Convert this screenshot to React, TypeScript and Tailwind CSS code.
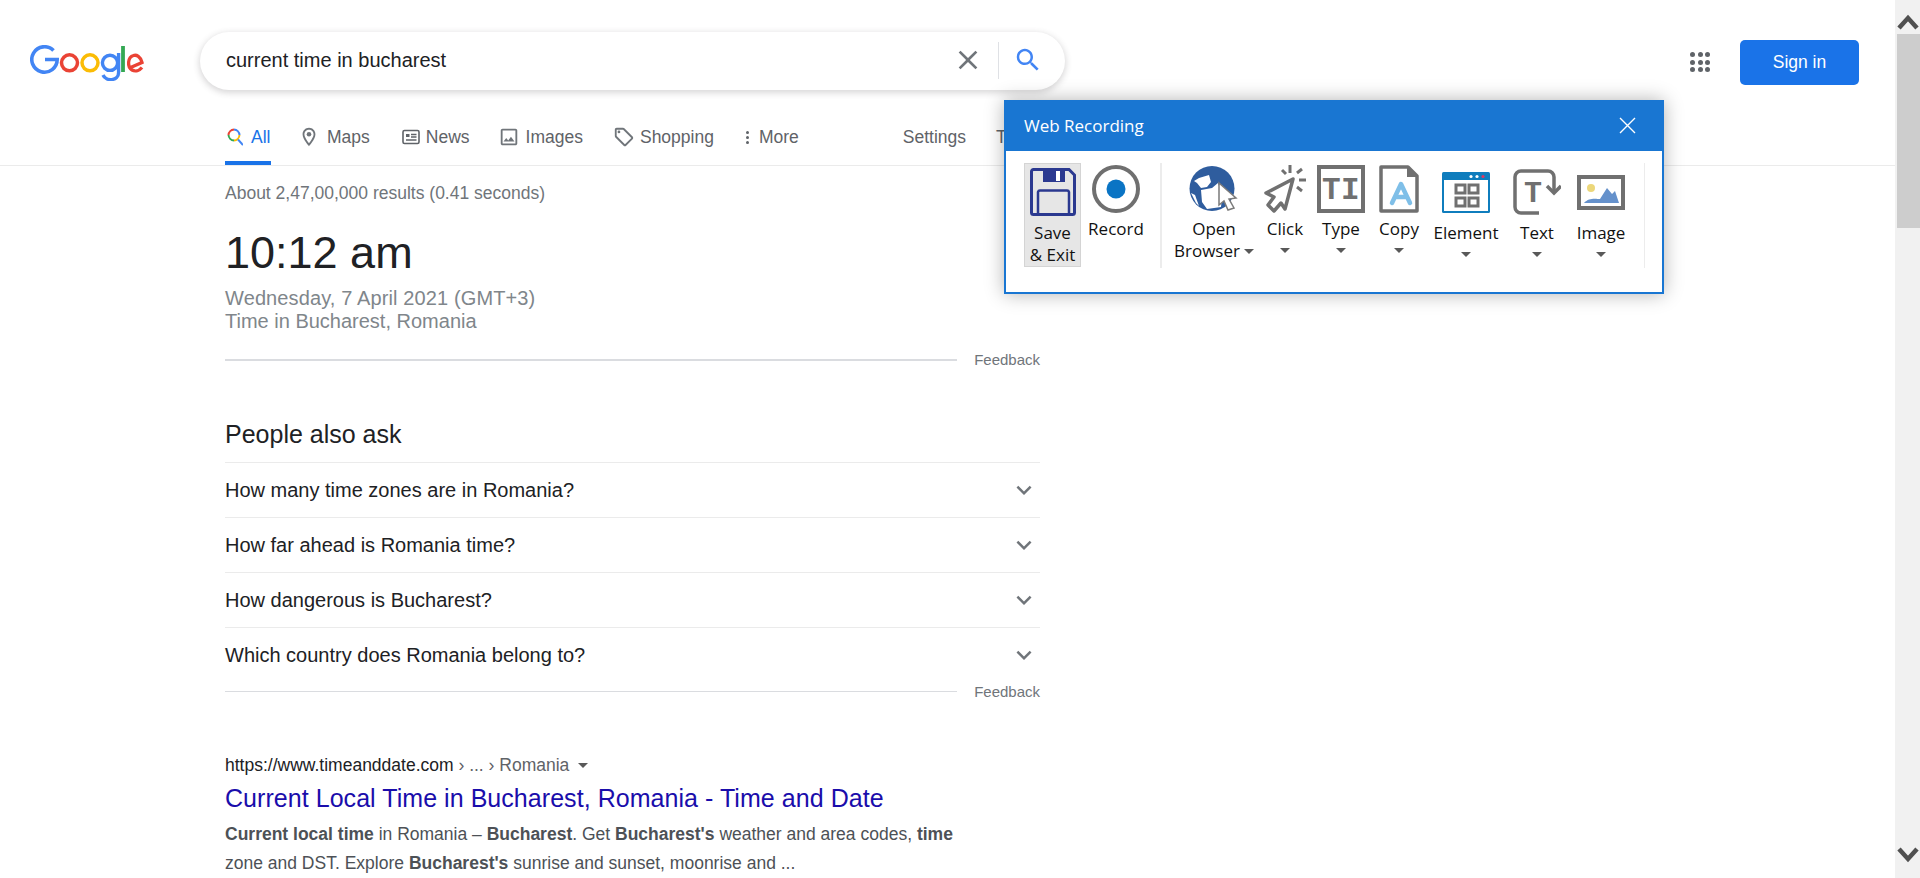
import type { ReactNode } from "react";

const arial = "font-['Liberation_Sans',Arial,sans-serif]";

function GoogleLogo() {
  return (
    <svg width="114" height="36" viewBox="0 0 114 36" fill="none" className="ml-[30px] mt-[13px] shrink-0">
      <path d="M23.5 5.5A12.7 12.7 0 1 0 27.200 14.500H15" stroke="#4285f4" strokeWidth="3.600" />
      <circle cx="39.500" cy="17.800" r="8" stroke="#ea4335" strokeWidth="3.500" />
      <circle cx="60" cy="17.800" r="8" stroke="#fbbc05" strokeWidth="3.500" />
      <circle cx="80" cy="17.800" r="7.600" stroke="#4285f4" strokeWidth="3.400" />
      <path d="M88.600 8V27.500C88.600 36 76 37 73 30" stroke="#4285f4" strokeWidth="3.400" />
      <path d="M93 1V27" stroke="#34a853" strokeWidth="3.800" />
      <path d="M100.500 22.500L112 17.500C110.500 11.500 106.500 9.500 103.500 10.500C97.500 12 97 22 102 25C105.500 27 109.500 25.500 112 22.500" stroke="#ea4335" strokeWidth="3.300" />
    </svg>
  );
}

function MatIcon({ d, size = 22, color = "#70757a", children }: { d: string; size?: number; color?: string; children?: ReactNode }) {
  return (
    <svg width={size} height={size} viewBox="0 0 24 24" fill={color} className="shrink-0">
      <path d={d} />
      {children}
    </svg>
  );
}

const CHEVRON = "M16.59 8.59L12 13.17 7.41 8.59 6 10l6 6 6-6z";

function NavItem({ icon, label, active, className }: { icon?: ReactNode; label: string; active?: boolean; className: string }) {
  return (
    <div
      className={`flex h-full items-center border-b-4 pt-[23px] text-[17.5px] ${
        active ? "border-[#1a73e8] text-[#1a73e8]" : "border-transparent text-[#5f6368]"
      } ${className}`}
    >
      {icon}
      <span>{label}</span>
    </div>
  );
}

function Question({ text }: { text: string }) {
  return (
    <div className="flex h-[55px] items-center justify-between border-t border-[#ebebeb] pr-px text-[20px] text-[#202124]">
      <span>{text}</span>
      <MatIcon d={CHEVRON} size={30} />
    </div>
  );
}

function Feedback({ thick, className = "" }: { thick?: boolean; className?: string }) {
  return (
    <div className={`flex items-center justify-between ${className}`}>
      <div className={`w-[732px] bg-[#dadce0] ${thick ? "h-[2px]" : "h-px"}`} />
      <span className="text-[15px] text-[#70757a]">Feedback</span>
    </div>
  );
}

function Caret({ className = "" }: { className?: string }) {
  return <span className={`inline-block h-0 w-0 border-x-[5px] border-t-[5px] border-x-transparent border-t-[#595959] ${className}`} />;
}

function RibbonItem({
  icon,
  lines,
  className,
  labelClass,
  caret,
}: {
  icon: ReactNode;
  lines: ReactNode[];
  className: string;
  labelClass: string;
  caret?: boolean;
}) {
  return (
    <div className={`flex h-[104px] shrink-0 flex-col items-center ${className}`}>
      <div className="flex h-[48px] items-center justify-center">{icon}</div>
      <div className={`flex flex-col items-center leading-[22px] ${labelClass}`}>
        {lines.map((l, i) => (
          <span key={i} className="flex items-center gap-[4px]">
            {l}
          </span>
        ))}
        {caret && <Caret className="mt-[8px]" />}
      </div>
    </div>
  );
}

function DiskIcon() {
  return (
    <svg width="46" height="48" viewBox="0 0 46 48" fill="none">
      <path d="M3.500 1.500H39L44.500 7V44.500A2 2 0 0 1 42.500 46.500H3.500A2 2 0 0 1 1.500 44.500V3.500A2 2 0 0 1 3.500 1.500Z" stroke="#2b3990" strokeWidth="3" />
      <path d="M13 1H35V14H13Z" fill="#2b3990" />
      <path d="M26 3H30V13H26Z" fill="#fff" />
      <path d="M8 46V24A2 2 0 0 1 10 22.500H37A2 2 0 0 1 39 24V46" stroke="#2b3990" strokeWidth="2.500" />
    </svg>
  );
}

function RecordIcon() {
  return (
    <svg width="48" height="48" viewBox="0 0 48 48" fill="none">
      <circle cx="24" cy="24" r="22" stroke="#6f6f6f" strokeWidth="4" />
      <circle cx="24" cy="24" r="9.500" fill="#0a74c4" />
    </svg>
  );
}

function GlobeIcon() {
  return (
    <svg width="50" height="46" viewBox="0 0 50 46" fill="none">
      <circle cx="23" cy="22.500" r="22.500" fill="#2f5d9e" />
      <path d="M5 15L10 12L20 9L22 16L18 21L12 22L8 17Z" fill="#fff" />
      <path d="M12 24L23 22L29 17L33 31L32 41L18 43L13 36Z" fill="#fff" />
      <path d="M2 27L6 29L10 40L7 37Z" fill="#fff" />
      <path d="M30 17L47 32L40 33L45 42L39 44L35 35L30 39Z" fill="#fff" stroke="#7a7a7a" strokeWidth="1.500" />
    </svg>
  );
}

function ClickIcon() {
  return (
    <svg width="43" height="48" viewBox="0 0 43 48" fill="none" stroke="#707070">
      <path d="M29 14L2 28L10 32L4 40L10 46L17 38L21 44Z" strokeWidth="3.500" strokeLinejoin="round" fill="#fff" />
      <path d="M26 0V8M18 5L22 9M33 8L38 4M35 15H42M33 22L38 26" strokeWidth="3" />
    </svg>
  );
}

function TypeIcon() {
  return (
    <svg width="48" height="48" viewBox="0 0 48 48" fill="none">
      <rect x="2" y="2" width="44" height="44" stroke="#707070" strokeWidth="4" />
      <text x="5" y="34" fill="#707070" fontFamily="'Liberation Mono',monospace" fontWeight="700" fontSize="31">T</text>
      <text x="24" y="34" fill="#707070" fontFamily="'Liberation Mono',monospace" fontWeight="700" fontSize="31">I</text>
    </svg>
  );
}

function CopyIcon() {
  return (
    <svg width="40" height="48" viewBox="0 0 40 48" fill="none">
      <path d="M2 2H29L38 11V46H2Z" stroke="#707070" strokeWidth="3.500" strokeLinejoin="round" />
      <path d="M28 1L39 12H28Z" fill="#707070" />
      <path d="M13 38L22 19L31 38M16 32H28" stroke="#7fbfe8" strokeWidth="4.500" strokeLinecap="round" strokeLinejoin="round" />
    </svg>
  );
}

function ElementIcon() {
  return (
    <svg width="48" height="41" viewBox="0 0 48 41" fill="none">
      <rect width="48" height="41" rx="1.500" fill="#0f7dbd" />
      <rect x="2" y="8" width="44" height="31" fill="#fff" />
      <circle cx="29" cy="4.500" r="1.600" fill="#fff" />
      <circle cx="35" cy="4.500" r="1.600" fill="#fff" />
      <circle cx="41" cy="4.500" r="1.600" fill="#e0355f" />
      <g stroke="#707070" strokeWidth="3">
        <rect x="14" y="13" width="9" height="8" />
        <rect x="27" y="13" width="9" height="8" />
        <rect x="14" y="26" width="9" height="8" />
        <rect x="27" y="26" width="9" height="8" />
      </g>
    </svg>
  );
}

function TextIcon() {
  return (
    <svg width="48" height="46" viewBox="0 0 48 46" fill="none">
      <path d="M26 44H8A6 6 0 0 1 2 38V8A6 6 0 0 1 8 2H35A6 6 0 0 1 41 8V22" stroke="#707070" strokeWidth="3.500" />
      <path d="M34 17L41 24L48 17" stroke="#707070" strokeWidth="3.500" />
      <text x="11" y="33" fill="#707070" fontFamily="'Liberation Mono',monospace" fontWeight="700" fontSize="30">T</text>
    </svg>
  );
}

function ImageIcon() {
  return (
    <svg width="48" height="35" viewBox="0 0 48 35" fill="none">
      <rect x="2" y="2" width="44" height="31" stroke="#707070" strokeWidth="4" />
      <circle cx="14" cy="13" r="4" fill="#ecd77a" />
      <path d="M7 28C12 22 20 24 23 24L30 13L35 19L38 16L42 28Z" fill="#6591cb" />
    </svg>
  );
}

function WebRecording() {
  return (
    <div className="absolute left-[1004px] top-[100px] z-10 h-[194px] w-[660px] border-2 border-[#1976d2] bg-white font-['Open_Sans',sans-serif] text-[17px] text-[#111] shadow-[0_0_18px_rgba(0,0,0,0.3)]">
      <div className="flex h-[49px] items-center justify-between bg-[#1976d2] pb-[2px] pl-[18px] pr-[26px] text-white">
        <span>Web Recording</span>
        <svg width="17" height="17" viewBox="0 0 17 17" stroke="#fff" strokeWidth="1.400">
          <path d="M1 1L16 16M16 1L1 16" />
        </svg>
      </div>
      <div className="flex pl-[18px] pt-[12px]">
        <RibbonItem
          icon={<DiskIcon />}
          lines={["Save", "& Exit"]}
          className="w-[57px] border border-[#d4d4d4] bg-[#e6e6e6] pt-[4px]"
          labelClass="mt-[6px]"
        />
        <RibbonItem icon={<RecordIcon />} lines={["Record"]} className="ml-[5px] w-[60px] pt-[2px]" labelClass="mt-[5px]" />
        <div className="ml-[14px] h-[105px] w-[2px] bg-[#ececec]" />
        <RibbonItem
          icon={<GlobeIcon />}
          lines={[
            "Open",
            <>
              Browser
              <Caret />
            </>,
          ]}
          className="ml-[7px] w-[90px] pt-[2px]"
          labelClass="mt-[5px]"
        />
        <RibbonItem icon={<ClickIcon />} lines={["Click"]} className="ml-[3px] w-[46px] pt-[2px]" labelClass="mt-[5px]" caret />
        <RibbonItem icon={<TypeIcon />} lines={["Type"]} className="ml-[9px] w-[48px] pt-[2px]" labelClass="mt-[5px]" caret />
        <RibbonItem icon={<CopyIcon />} lines={["Copy"]} className="ml-[9px] w-[50px] pt-[2px]" labelClass="mt-[5px]" caret />
        <RibbonItem icon={<ElementIcon />} lines={["Element"]} className="ml-[9px] w-[66px] pt-[5px]" labelClass="mt-[6px]" caret />
        <RibbonItem icon={<TextIcon />} lines={["Text"]} className="ml-[8px] w-[60px] pt-[5px]" labelClass="mt-[6px]" caret />
        <RibbonItem icon={<ImageIcon />} lines={["Image"]} className="ml-[4px] w-[60px] pt-[5px]" labelClass="mt-[6px]" caret />
        <div className="ml-[13px] h-[105px] w-px bg-[#ececec]" />
      </div>
    </div>
  );
}

function Scrollbar() {
  return (
    <div className="flex w-[25px] shrink-0 flex-col items-center justify-between bg-[#f1f1f1] pl-px">
      <div className="flex w-full flex-col items-center">
        <svg width="22" height="34" viewBox="0 0 22 34" fill="none" stroke="#505050" strokeWidth="4.500">
          <path d="M2 28L11 18L20 28" />
        </svg>
        <div className="h-[194px] w-[23px] bg-[#cdcdcd]" />
      </div>
      <svg width="22" height="34" viewBox="0 0 22 34" fill="none" stroke="#505050" strokeWidth="4.500">
        <path d="M2 5L11 15L20 5" />
      </svg>
    </div>
  );
}

export default function App() {
  return (
    <div className={`relative flex h-[878px] w-[1920px] overflow-hidden bg-white ${arial}`}>
      <div className="min-w-0 flex-1">
        <div className="flex pt-[32px]">
          <GoogleLogo />
          <div className="ml-[56px] flex h-[58px] w-[865px] items-center rounded-[29px] bg-white pb-[2px] pl-[26px] pr-[22px] text-[20px] text-[#202124] shadow-[0_2px_6px_1px_rgba(64,60,67,0.2)]">
            <span className="flex-1">current time in bucharest</span>
            <MatIcon d="M19 6.41L17.59 5 12 10.59 6.41 5 5 6.41 10.59 12 5 17.59 6.41 19 12 13.41 17.59 19 19 17.59 13.41 12z" size={32} />
            <div className="ml-[14px] h-[37px] w-px bg-[#dfe1e5]" />
            <div className="ml-[14px]">
              <MatIcon d="M15.5 14h-.79l-.28-.27C15.41 12.59 16 11.11 16 9.5 16 5.91 13.09 3 9.5 3S3 5.91 3 9.5 5.91 16 9.5 16c1.61 0 3.09-.59 4.23-1.57l.27.28v.79l5 4.99L20.49 19l-4.99-5zm-6 0C7.01 14 5 11.99 5 9.5S7.01 5 9.5 5 14 7.01 14 9.5 11.99 14 9.5 14z" size={30} color="#4285f4" />
            </div>
          </div>
          <div className="ml-auto mr-[30px] mt-[20px] grid h-[20px] w-[20px] grid-cols-3 gap-[2.5px]">
            {Array.from({ length: 9 }).map((_, i) => (
              <span key={i} className="h-[5px] w-[5px] rounded-full bg-[#5f6368]" />
            ))}
          </div>
          <div className="mr-[36px] mt-[8px] flex h-[45px] w-[119px] items-center justify-center rounded-[5px] bg-[#1a73e8] text-[17.5px] text-white">
            Sign in
          </div>
        </div>

        <div className="flex h-[76px] border-b border-[#ebebeb] pl-[225px]">
          <NavItem
            active
            label="All"
            className="w-[46px] gap-[8px] pl-[2px]"
            icon={
              <svg width="16" height="18" viewBox="0 0 16 18" fill="none" strokeWidth="2" className="shrink-0">
                <path d="M1.500 7A6 6 0 0 1 7 1.500" stroke="#ea4335" />
                <path d="M7 1.500A6 6 0 0 1 12.500 7" stroke="#4285f4" />
                <path d="M12.500 7A6 6 0 0 1 7 12.500" stroke="#fbbc05" />
                <path d="M7 12.500A6 6 0 0 1 1.500 7" stroke="#34a853" />
                <path d="M11 11.500L16 17" stroke="#4285f4" />
              </svg>
            }
          />
          <NavItem
            label="Maps"
            className="ml-[27px] gap-[7px]"
            icon={
              <MatIcon d="M12 2C8.13 2 5 5.13 5 9c0 5.25 7 13 7 13s7-7.750 7-13c0-3.870-3.130-7-7-7zM7 9c0-2.760 2.240-5 5-5s5 2.240 5 5c0 2.880-2.880 7.190-5 9.880C9.920 16.210 7 11.850 7 9z">
                <circle cx="12" cy="9" r="2.500" />
              </MatIcon>
            }
          />
          <NavItem
            label="News"
            className="ml-[32px] gap-[6px]"
            icon={
              <svg width="18" height="18" viewBox="0 0 18 18" fill="none" stroke="#5f6368" strokeWidth="1.600" className="shrink-0">
                <rect x="1" y="2.500" width="16" height="13" rx="1.500" />
                <rect x="4" y="6" width="3.500" height="3" fill="#5f6368" stroke="none" />
                <path d="M9 6.500H14.500M9 9H14.500M4 12H14.500" />
              </svg>
            }
          />
          <NavItem
            label="Images"
            className="ml-[28px] gap-[6px]"
            icon={<MatIcon d="M19 5v14H5V5h14m0-2H5c-1.100 0-2 .9-2 2v14c0 1.100.9 2 2 2h14c1.100 0 2-.9 2-2V5c0-1.100-.9-2-2-2zm-4.860 8.860l-3 3.870L9 13.140 6 17h12l-3.860-5.140z" />}
          />
          <NavItem
            label="Shopping"
            className="ml-[30px] gap-[5px]"
            icon={
              <MatIcon d="M21.410 11.580l-9-9C12.050 2.220 11.550 2 11 2H4c-1.100 0-2 .9-2 2v7c0 .55.22 1.050.59 1.420l9 9c.36.36.86.58 1.410.58s1.050-.22 1.410-.59l7-7c.37-.36.59-.86.59-1.410s-.23-1.060-.59-1.420zM13 20.010L4 11V4h7v-.01l9 9-7 7.020z">
                <circle cx="6.500" cy="6.500" r="1.500" />
              </MatIcon>
            }
          />
          <NavItem
            label="More"
            className="ml-[32px] gap-[10px]"
            icon={
              <span className="flex flex-col gap-[2px]">
                <span className="h-[3px] w-[3px] rounded-full bg-[#5f6368]" />
                <span className="h-[3px] w-[3px] rounded-full bg-[#5f6368]" />
                <span className="h-[3px] w-[3px] rounded-full bg-[#5f6368]" />
              </span>
            }
          />
          <NavItem label="Settings" className="ml-[104px]" />
          <NavItem label="Tools" className="ml-[30px]" />
        </div>

        <div className="ml-[225px] w-[815px]">
          <div className="pt-[15px] text-[17.5px] leading-[24px] text-[#70757a]">About 2,47,00,000 results (0.41 seconds)</div>
          <div className="mt-[21px] text-[45px] leading-[54px] text-[#202124]">10:12 am</div>
          <div className="mt-[7px] text-[20px] leading-[23px] text-[#80868b]">
            <div className="tracking-[0.12px]">Wednesday, 7 April 2021 (GMT+3)</div>
            <div>Time in Bucharest, Romania</div>
          </div>
          <div className="mt-[16px]">
            <Feedback thick />
          </div>
          <div className="mt-[47px] pb-[13px] text-[25px] leading-[30px] text-[#202124]">People also ask</div>
          <Question text="How many time zones are in Romania?" />
          <Question text="How far ahead is Romania time?" />
          <Question text="How dangerous is Bucharest?" />
          <Question text="Which country does Romania belong to?" />
          <Feedback className="-mt-px" />
          <div className="mt-[50px] flex items-center text-[17.5px] leading-[24px] text-[#5f6368]">
            <span className="text-[#202124]">https://www.timeanddate.com</span>
            <span>&nbsp;› ... › Romania</span>
            <Caret className="ml-[9px] border-t-[#70757a]" />
          </div>
          <div className="mt-[5px] text-[25px] leading-[33px] tracking-[0.05px] text-[#1a0dab]">Current Local Time in Bucharest, Romania - Time and Date</div>
          <div className="mt-[5px] w-[760px] text-[17.5px] leading-[29px] text-[#4d5156]">
            <b>Current local time</b> in Romania – <b>Bucharest</b>. Get <b>Bucharest's</b> weather and area codes, <b>time</b> zone and DST. Explore{" "}
            <b>Bucharest's</b> sunrise and sunset, moonrise and ...
          </div>
        </div>
      </div>
      <Scrollbar />
      <WebRecording />
    </div>
  );
}
